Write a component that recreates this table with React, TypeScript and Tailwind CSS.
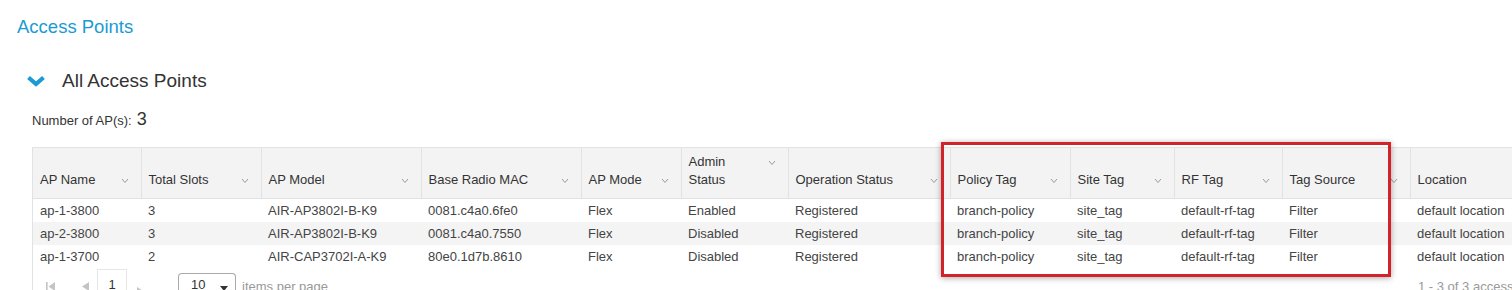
import React from "react"

const columns = [
    { label: "AP Name", width: 108 },
    { label: "Total Slots", width: 120 },
    { label: "AP Model", width: 160 },
    { label: "Base Radio MAC", width: 160 },
    { label: "AP Mode", width: 100 },
    { label: "Admin Status", width: 107, lines: ["Admin", "Status"] },
    { label: "Operation Status", width: 162 },
    { label: "Policy Tag", width: 120 },
    { label: "Site Tag", width: 104 },
    { label: "RF Tag", width: 108 },
    { label: "Tag Source", width: 128 },
    { label: "Location", width: 140 },
]

const rows = [
    ["ap-1-3800", "3", "AIR-AP3802I-B-K9", "0081.c4a0.6fe0", "Flex", "Enabled", "Registered", "branch-policy", "site_tag", "default-rf-tag", "Filter", "default location"],
    ["ap-2-3800", "3", "AIR-AP3802I-B-K9", "0081.c4a0.7550", "Flex", "Disabled", "Registered", "branch-policy", "site_tag", "default-rf-tag", "Filter", "default location"],
    ["ap-1-3700", "2", "AIR-CAP3702I-A-K9", "80e0.1d7b.8610", "Flex", "Disabled", "Registered", "branch-policy", "site_tag", "default-rf-tag", "Filter", "default location"],
]

function SortIcon() {
    return (
        <svg width="8" height="6" viewBox="0 0 8 6" className="mt-[7px] shrink-0">
            <polyline points="1,1 4,4.5 7,1" fill="none" stroke="#9a9a9a" strokeWidth="1" />
        </svg>
    )
}

export default function App() {
    return (
        <div className="w-[1512px] h-[290px] overflow-hidden bg-white font-['Liberation_Sans',Arial,sans-serif] text-[#333]">
            {/* Page title */}
            <div className="pl-[17px] pt-[15px] h-[52px] text-[18.5px] leading-[24px] text-[#1a9bd3]">
                Access Points
            </div>

            {/* Section header */}
            <div className="flex items-center h-[58px] pl-[26px]">
                <svg width="20" height="12" viewBox="0 0 20 12">
                    <polyline points="2.5,2.5 10,9 17.5,2.5" fill="none" stroke="#1a9bd3" strokeWidth="4.2" strokeLinejoin="miter" />
                </svg>
                <span className="ml-[16px] text-[19px] leading-[24px] text-[#333]">All Access Points</span>
            </div>

            {/* AP count */}
            <div className="flex items-baseline pl-[32px] h-[37px] leading-[18px]">
                <span className="text-[13px]">Number of AP(s):</span>
                <span className="ml-[5px] text-[18px]">3</span>
            </div>

            {/* Table */}
            <div className="relative pl-[32px]">
                <div className="border-l border-[#e2e2e2]">
                    <table className="table-fixed border-collapse" style={{ width: 1517 }}>
                        <colgroup>
                            {columns.map((c) => (
                                <col key={c.label} style={{ width: c.width }} />
                            ))}
                        </colgroup>
                        <thead>
                            <tr className="h-[51px] bg-[#f3f3f3] border-t border-b border-[#e2e2e2]">
                                {columns.map((c) => (
                                    <th
                                        key={c.label}
                                        className="align-bottom pb-[9px] pl-[7px] pr-[12px] text-left font-normal text-[13px] leading-[18px] text-[#333] border-r border-[#e2e2e2]"
                                    >
                                        <div className="flex items-start justify-between">
                                            <span>
                                                {c.lines ? (
                                                    <>
                                                        {c.lines[0]}
                                                        <br />
                                                        {c.lines[1]}
                                                    </>
                                                ) : (
                                                    c.label
                                                )}
                                            </span>
                                            {c.label !== "Location" && <SortIcon />}
                                        </div>
                                    </th>
                                ))}
                            </tr>
                        </thead>
                        <tbody>
                            {rows.map((r, i) => (
                                <tr key={i} className={`h-[23px] ${i === 1 ? "bg-[#f4f4f4]" : "bg-white"}`}>
                                    {r.map((v, j) => (
                                        <td key={j} className="pl-[7px] text-[13px] leading-[23px] text-[#444] whitespace-nowrap overflow-hidden">
                                            {v}
                                        </td>
                                    ))}
                                </tr>
                            ))}
                        </tbody>
                    </table>

                    {/* Pagination */}
                    <div className="flex items-end h-[24px] text-[13px] text-[#999]">
                        <div className="flex items-center h-[20px] ml-[13px] mt-auto">
                            <svg width="9" height="9" viewBox="0 0 9 9" className="mt-[8px]">
                                <rect x="0" y="0" width="1.6" height="9" fill="#c4c4c4" />
                                <polygon points="9,0 2.5,4.5 9,9" fill="#c4c4c4" />
                            </svg>
                            <svg width="8" height="9" viewBox="0 0 8 9" className="ml-[26px] mt-[8px]">
                                <polygon points="8,0 1,4.5 8,9" fill="#c4c4c4" />
                            </svg>
                        </div>
                        <div className="ml-[8px] w-[30px] h-[23px] border border-[#e6e6e6] border-b-0 bg-white text-center text-[#333] pt-[7px] leading-[16px]">
                            1
                        </div>
                        <svg width="8" height="9" viewBox="0 0 8 9" className="ml-[10px] mb-[-4px]">
                            <polygon points="0,0 7,4.5 0,9" fill="#c4c4c4" />
                        </svg>
                        <div className="ml-[33px] w-[58px] h-[19px] border border-[#a9a9a9] border-b-0 rounded-t-[4px] flex items-start pt-[3px] pl-[12px] text-[#333] leading-[16px]">
                            <span>10</span>
                            <svg width="8" height="5" viewBox="0 0 8 5" className="ml-[15px] mt-[9px]">
                                <polygon points="0,0 8,0 4,5" fill="#333" />
                            </svg>
                        </div>
                        <span className="ml-[6px] leading-[16px] mb-[-3px]">items per page</span>
                        <span className="ml-auto mr-[-6px] w-[100px] leading-[16px] mb-[-3px] whitespace-nowrap overflow-hidden">1 - 3 of 3 access points</span>
                    </div>
                </div>

                {/* Highlight box */}
                <div className="absolute left-[941px] top-[-5px] w-[450px] h-[135px] border-[3px] border-[#d2232a] shadow-[0_1px_6px_rgba(0,0,0,0.35)] pointer-events-none" />
            </div>
        </div>
    )
}
